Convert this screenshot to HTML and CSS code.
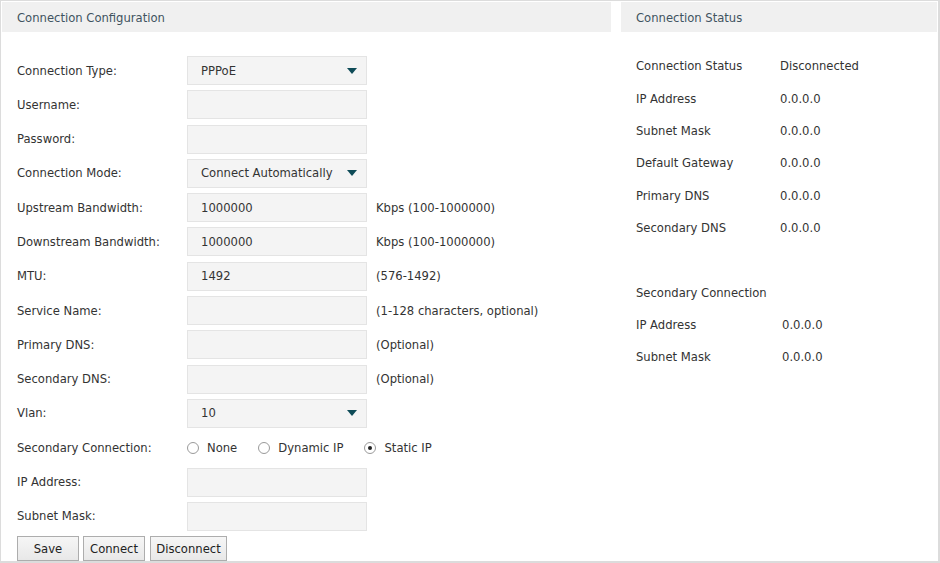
FILE: index.html
```html
<!DOCTYPE html>
<html>
<head>
<meta charset="utf-8">
<link rel="stylesheet" href="styles.css">
</head>
<body>
<div class="frame">
  <section class="panel config">
    <div class="panel-head">Connection Configuration</div>
    <div class="form">
      <div class="row"><span class="lbl">Connection Type:</span><div class="field select"><span>PPPoE</span><i class="arrow"></i></div></div>
      <div class="row"><span class="lbl">Username:</span><div class="field"></div></div>
      <div class="row"><span class="lbl">Password:</span><div class="field"></div></div>
      <div class="row"><span class="lbl">Connection Mode:</span><div class="field select"><span>Connect Automatically</span><i class="arrow"></i></div></div>
      <div class="row"><span class="lbl">Upstream Bandwidth:</span><div class="field"><span>1000000</span></div><span class="hint">Kbps (100-1000000)</span></div>
      <div class="row"><span class="lbl">Downstream Bandwidth:</span><div class="field"><span>1000000</span></div><span class="hint">Kbps (100-1000000)</span></div>
      <div class="row"><span class="lbl">MTU:</span><div class="field"><span>1492</span></div><span class="hint">(576-1492)</span></div>
      <div class="row"><span class="lbl">Service Name:</span><div class="field"></div><span class="hint">(1-128 characters, optional)</span></div>
      <div class="row"><span class="lbl">Primary DNS:</span><div class="field"></div><span class="hint">(Optional)</span></div>
      <div class="row"><span class="lbl">Secondary DNS:</span><div class="field"></div><span class="hint">(Optional)</span></div>
      <div class="row"><span class="lbl">Vlan:</span><div class="field select"><span>10</span><i class="arrow"></i></div></div>
      <div class="row"><span class="lbl">Secondary Connection:</span>
        <div class="radios">
          <span class="radio"><i class="dot"></i>None</span>
          <span class="radio"><i class="dot"></i>Dynamic IP</span>
          <span class="radio"><i class="dot on"></i>Static IP</span>
        </div>
      </div>
      <div class="row"><span class="lbl">IP Address:</span><div class="field"></div></div>
      <div class="row"><span class="lbl">Subnet Mask:</span><div class="field"></div></div>
      <div class="buttons">
        <button class="btn save">Save</button>
        <button class="btn connect">Connect</button>
        <button class="btn disconnect">Disconnect</button>
      </div>
    </div>
  </section>
  <section class="panel status">
    <div class="panel-head">Connection Status</div>
    <div class="stat">
      <div class="srow"><span class="sl">Connection Status</span><span>Disconnected</span></div>
      <div class="srow"><span class="sl">IP Address</span><span>0.0.0.0</span></div>
      <div class="srow"><span class="sl">Subnet Mask</span><span>0.0.0.0</span></div>
      <div class="srow"><span class="sl">Default Gateway</span><span>0.0.0.0</span></div>
      <div class="srow"><span class="sl">Primary DNS</span><span>0.0.0.0</span></div>
      <div class="srow"><span class="sl">Secondary DNS</span><span>0.0.0.0</span></div>
    </div>
    <div class="stat second">
      <div class="srow"><span class="sl">Secondary Connection</span></div>
      <div class="srow"><span class="sl wide">IP Address</span><span>0.0.0.0</span></div>
      <div class="srow"><span class="sl wide">Subnet Mask</span><span>0.0.0.0</span></div>
    </div>
  </section>
</div>
</body>
</html>
```
FILE: styles.css
```css
html, body { margin: 0; padding: 0; background: #fff; }
body {
  font-family: "DejaVu Sans", sans-serif;
  font-size: 11.6px;
  color: #333;
}
.frame {
  box-sizing: border-box;
  width: 940px;
  height: 563px;
  border: 1px solid #dcdcdc;
  border-right-width: 2px;
  border-bottom-width: 2px;
  padding: 1px;
  display: flex;
  gap: 10px;
  overflow: hidden;
}
.panel-head {
  box-sizing: border-box;
  height: 30px;
  line-height: 30px;
  padding-top: 1px;
  background: #f0f0f0;
  color: #3f5360;
  padding-left: 15px;
}
.config { width: 609px; flex: none; }
.status { flex: 1; }
.form { padding: 24px 0 0 15px; }
.row {
  display: flex;
  align-items: center;
  height: 29px;
  margin-bottom: 5.3px;
}
.lbl { width: 170px; flex: none; }
.field {
  box-sizing: border-box;
  width: 180px;
  height: 29px;
  background: #f4f4f4;
  border: 1px solid #e4e4e4;
  display: flex;
  align-items: center;
  padding-left: 13px;
  padding-right: 9px;
  flex: none;
}
.field span { flex: 1; }
.arrow {
  width: 0; height: 0;
  border-left: 5px solid transparent;
  border-right: 5px solid transparent;
  border-top: 6px solid #0e4b57;
}
.hint { margin-left: 9px; }
.radios { display: flex; align-items: center; }
.radio { display: flex; align-items: center; margin-right: 21px; }
.dot {
  box-sizing: border-box;
  width: 12px; height: 12px;
  border: 1px solid #9a9a9a;
  border-radius: 50%;
  background: #fff;
  margin-right: 8px;
  position: relative;
}
.dot.on::after {
  content: "";
  position: absolute;
  left: 3px; top: 3px;
  width: 4px; height: 4px;
  border-radius: 50%;
  background: #222;
}
.buttons { display: flex; margin-top: 1px; }
.btn {
  font: inherit;
  color: #222;
  height: 25px;
  padding: 0;
  border: 1px solid #adadad;
  background: linear-gradient(#f6f6f6, #e8e8e8);
  margin: 0;
}
.btn.save { width: 62px; }
.btn.connect { width: 62px; margin-left: 4px; }
.btn.disconnect { width: 77px; margin-left: 5px; }
.stat { padding: 18px 0 0 15px; }
.srow { display: flex; align-items: center; height: 32.4px; }
.sl { width: 144px; flex: none; }
.sl.wide { width: 146px; }
.second { padding-top: 32px; }
```
